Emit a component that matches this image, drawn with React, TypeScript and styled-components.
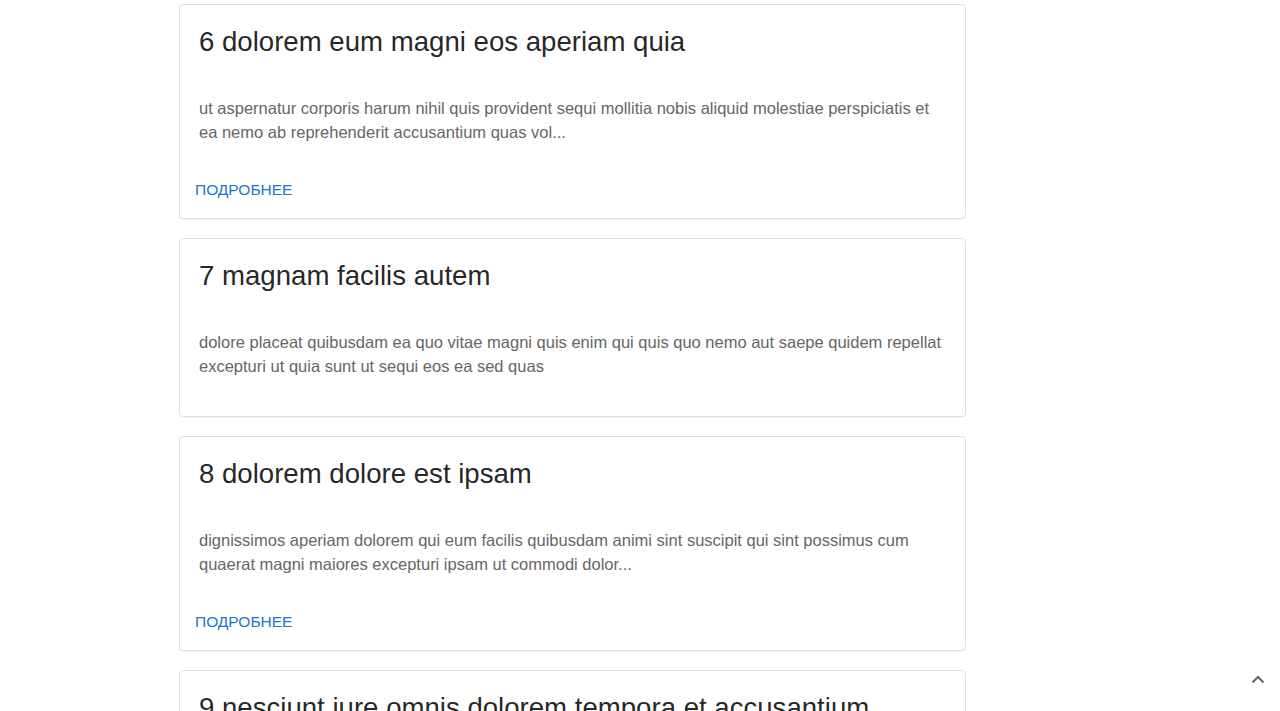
import React from "react";
import styled, { createGlobalStyle } from "styled-components";

const Global = createGlobalStyle`
  html, body {
    margin: 0;
    padding: 0;
    height: 711px;
    overflow: hidden;
    background: #ffffff;
    font-family: "Liberation Sans", Arial, sans-serif;
  }
`;

const Page = styled.div`
  display: flex;
  padding: 4px 0 0 179px;
`;

const List = styled.div`
  width: 787px;
  display: flex;
  flex-direction: column;
  gap: 19px;
`;

const Card = styled.article`
  background: #fff;
  border: 1px solid #e0e0e0;
  border-radius: 4px;
  box-shadow: 0 1px 1px rgba(0, 0, 0, 0.04);
`;

const Content = styled.div<{ $last: boolean }>`
  padding: 20px 19px ${(p) => (p.$last ? "38px" : "28px")} 19px;
`;

const Title = styled.h2`
  margin: 0;
  font-size: 27.6px;
  line-height: 34px;
  font-weight: 400;
  color: rgba(0, 0, 0, 0.87);
  white-space: nowrap;
`;

const Body = styled.p`
  margin: 37px 0 0;
  font-size: 16.5px;
  line-height: 24px;
  color: #666666;
`;

const Actions = styled.div`
  padding: 0 8px 10px 15px;
  display: flex;
`;

const MoreButton = styled.button`
  height: 36px;
  padding: 0;
  border: 0;
  background: transparent;
  font-family: "Liberation Sans", Arial, sans-serif;
  font-size: 15.5px;
  text-transform: uppercase;
  color: #1976d2;
  cursor: pointer;
`;

const ScrollTop = styled.button`
  position: fixed;
  right: 12px;
  bottom: 22px;
  width: 20px;
  height: 20px;
  padding: 0;
  border: 0;
  background: transparent;
  display: flex;
  align-items: center;
  justify-content: center;
`;

type Post = { title: string; body: string; more: boolean };

const posts: Post[] = [
  {
    title: "6 dolorem eum magni eos aperiam quia",
    body:
      "ut aspernatur corporis harum nihil quis provident sequi mollitia nobis aliquid molestiae perspiciatis et ea nemo ab reprehenderit accusantium quas vol...",
    more: true,
  },
  {
    title: "7 magnam facilis autem",
    body:
      "dolore placeat quibusdam ea quo vitae magni quis enim qui quis quo nemo aut saepe quidem repellat excepturi ut quia sunt ut sequi eos ea sed quas",
    more: false,
  },
  {
    title: "8 dolorem dolore est ipsam",
    body:
      "dignissimos aperiam dolorem qui eum facilis quibusdam animi sint suscipit qui sint possimus cum quaerat magni maiores excepturi ipsam ut commodi dolor...",
    more: true,
  },
  {
    title: "9 nesciunt iure omnis dolorem tempora et accusantium",
    body:
      "consectetur animi nesciunt iure dolore enim quia ad veniam autem ut quam aut nobis et est aut quod aut provident voluptas autem voluptas",
    more: false,
  },
];

export default function App() {
  return (
    <>
      <Global />
      <Page>
        <List>
          {posts.map((p) => (
            <Card key={p.title}>
              <Content $last={!p.more}>
                <Title>{p.title}</Title>
                <Body>{p.body}</Body>
              </Content>
              {p.more && (
                <Actions>
                  <MoreButton>Подробнее</MoreButton>
                </Actions>
              )}
            </Card>
          ))}
        </List>
      </Page>
      <ScrollTop aria-label="Наверх">
        <svg width="14" height="9" viewBox="0 0 14 9">
          <path d="M1.5 7.5 L7 2 L12.5 7.5" fill="none" stroke="#666" strokeWidth="2" />
        </svg>
      </ScrollTop>
    </>
  );
}
